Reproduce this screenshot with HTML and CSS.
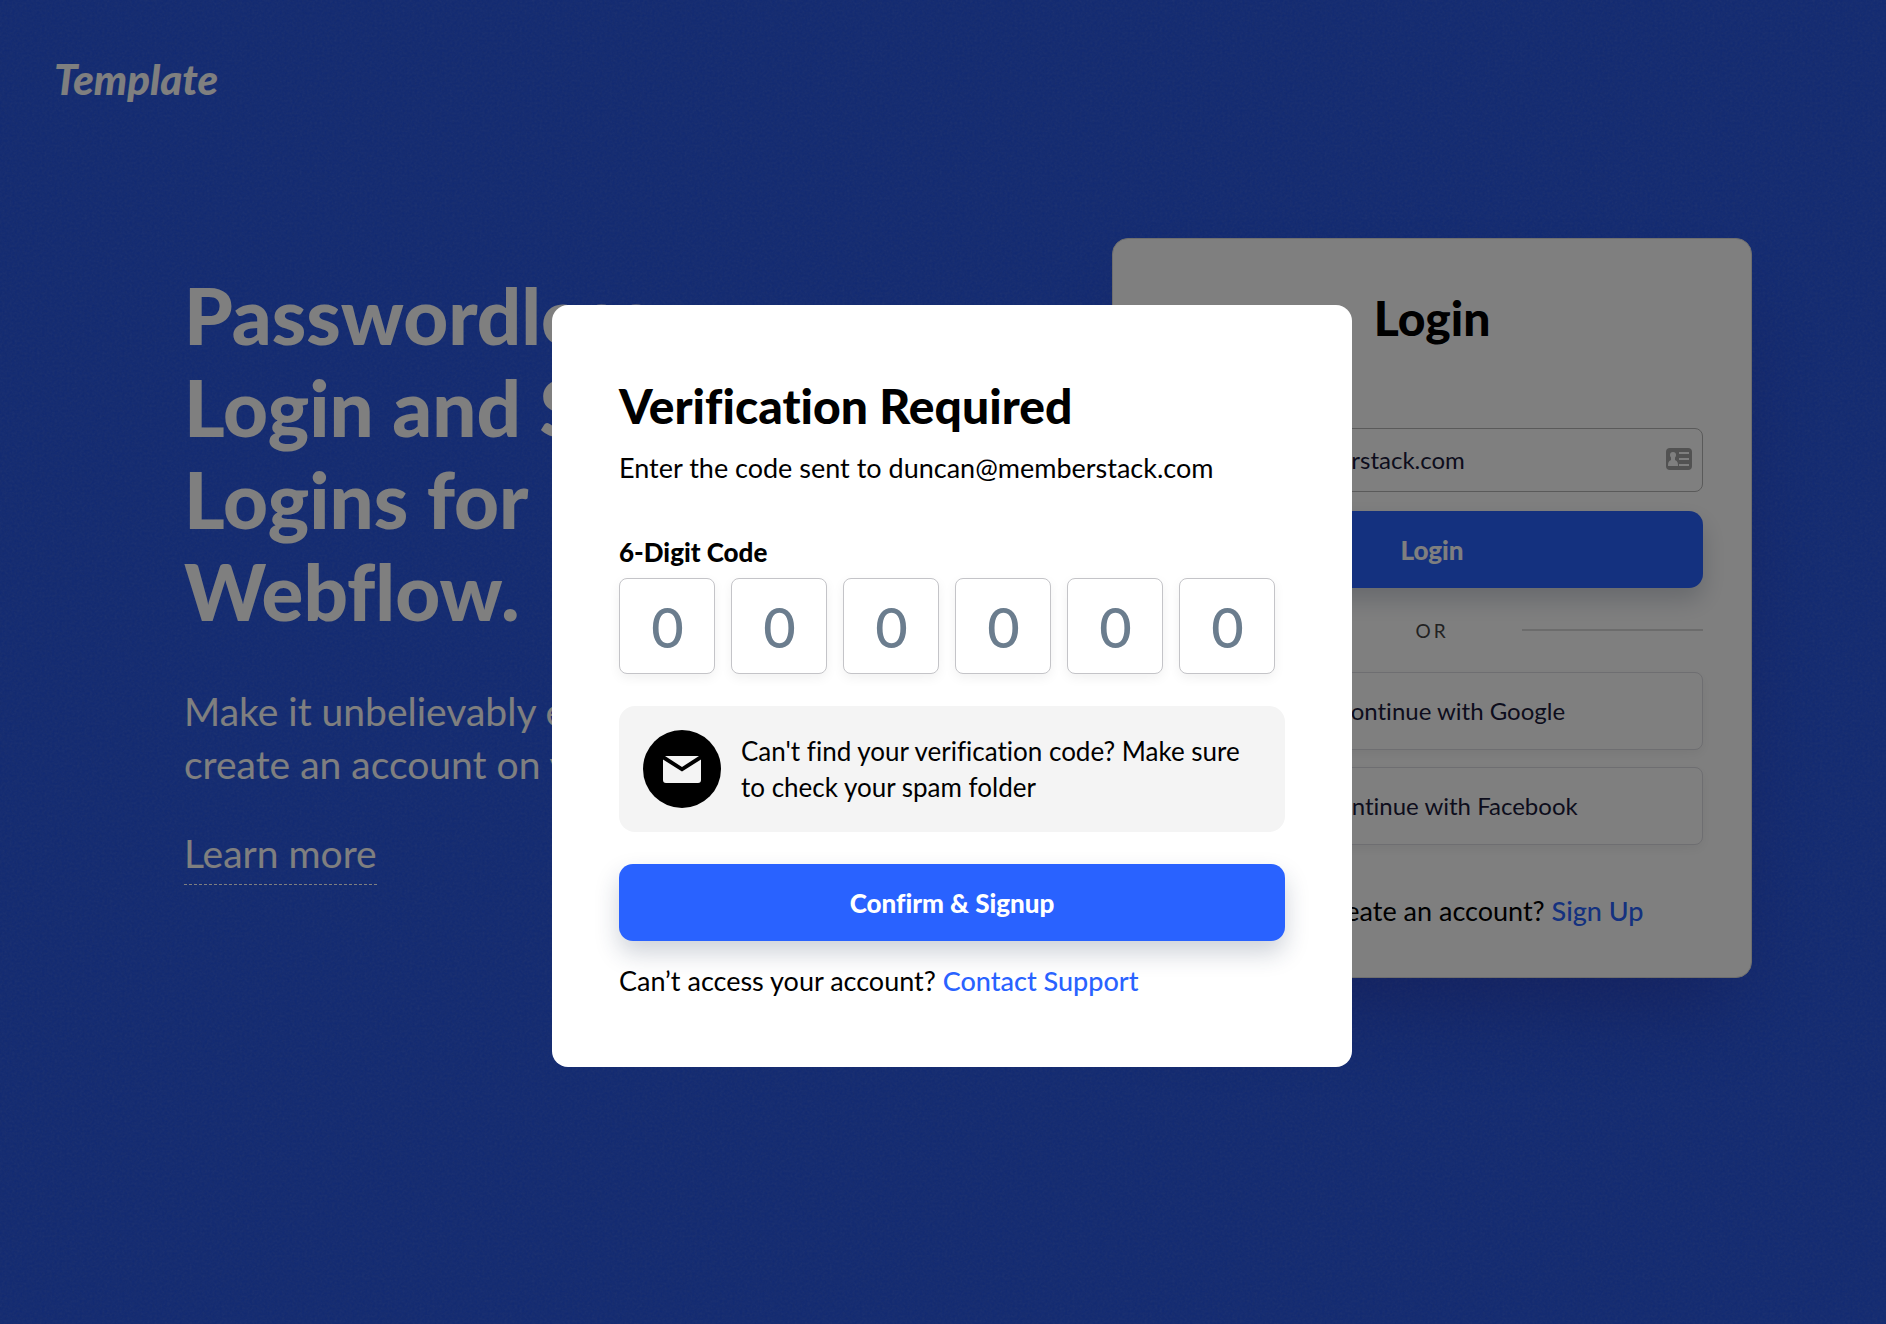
FILE: index.html
```html
<!DOCTYPE html>
<html lang="en">
<head>
<meta charset="utf-8">
<meta name="viewport" content="width=device-width, initial-scale=1">
<title>Passwordless Login</title>
<link rel="stylesheet" href="styles.css">
</head>
<body>
<div class="page">
  <svg class="grain" aria-hidden="true">
    <filter id="noise"><feTurbulence type="fractalNoise" baseFrequency="0.4" numOctaves="3" stitchTiles="stitch"/><feColorMatrix type="saturate" values="0"/></filter>
    <rect width="100%" height="100%" filter="url(#noise)"/>
  </svg>
  <header class="header"><a class="brand" href="#">Template</a></header>
  <main class="hero">
    <section class="intro">
      <h1 class="headline">Passwordless<br>Login and Social<br>Logins for<br>Webflow.</h1>
      <p class="lead">Make it unbelievably easy to<br>create an account on your site.</p>
      <a class="learn" href="#">Learn more</a>
    </section>
    <form class="card">
      <h2 class="title card-title">Login</h2>
      <div class="field">
        <input class="email" type="email" aria-label="Email" value="duncan@memberstack.com">
        <svg class="contact-icon" viewBox="0 0 26 22" aria-hidden="true">
          <rect width="26" height="22" rx="4" fill="#a4a4a4"/>
          <g fill="#fff"><circle cx="7" cy="7" r="3"/><path d="M5 9h4v3c2 1 3 2 3 6H2c0-4 1-5 3-6z"/><rect x="13" y="4" width="10" height="2"/><rect x="13" y="10" width="10" height="2"/><rect x="13" y="16" width="10" height="2"/></g>
        </svg>
      </div>
      <button class="primary" type="button">Login</button>
      <div class="divider"><span class="rule"></span><span>OR</span><span class="rule"></span></div>
      <div class="socials">
        <button class="social" type="button">
          <svg class="social-icon" viewBox="0 0 24 24" aria-hidden="true"><path d="M21 10H12v4h5a5 5 0 1 1-1-6l3-3a9 9 0 1 0 2 5z" fill="#4285f4"/></svg>
          Continue with Google
        </button>
        <button class="social" type="button">
          <svg class="social-icon" viewBox="0 0 24 24" aria-hidden="true"><circle cx="12" cy="12" r="12" fill="#1877f2"/><path d="M10 24v-9H7v-4h3V9c0-3 2-5 6-4v3c-2 0-3 0-3 2v1h3l-1 4h-2v9z" fill="#fff"/></svg>
          Continue with Facebook
        </button>
      </div>
      <p class="note card-note">Need to create an account? <a class="link" href="#">Sign Up</a></p>
    </form>
  </main>
</div>
<div class="overlay">
  <form class="modal" role="dialog" aria-labelledby="modal-title">
    <h2 class="title" id="modal-title">Verification Required</h2>
    <p class="note">Enter the code sent to duncan@memberstack.com</p>
    <fieldset class="code">
      <legend class="code-label">6-Digit Code</legend>
      <div class="digits">
        <input class="digit" aria-label="Digit 1" placeholder="0" maxlength="1">
        <input class="digit" aria-label="Digit 2" placeholder="0" maxlength="1">
        <input class="digit" aria-label="Digit 3" placeholder="0" maxlength="1">
        <input class="digit" aria-label="Digit 4" placeholder="0" maxlength="1">
        <input class="digit" aria-label="Digit 5" placeholder="0" maxlength="1">
        <input class="digit" aria-label="Digit 6" placeholder="0" maxlength="1">
      </div>
    </fieldset>
    <div class="hint">
      <svg class="hint-icon" viewBox="0 0 78 78" aria-hidden="true">
        <circle cx="39" cy="39" r="39"/>
        <path d="M20 29.500L39 41.500L58 29.500V50a3 3 0 0 1-3 3h-32a3 3 0 0 1-3-3z" fill="#f4f4f4"/>
        <path d="M22 26h34L39 37z" fill="#f4f4f4"/>
      </svg>
      <p class="hint-text">Can't find your verification code? Make sure to check your spam folder</p>
    </div>
    <button class="primary" type="button">Confirm &amp; Signup</button>
    <p class="note support">Can’t access your account? <a class="link" href="#">Contact Support</a></p>
  </form>
</div>
</body>
</html>
```
FILE: styles.css
```css
* { box-sizing: border-box; }
body { margin: 0; font-family: Lato, "Open Sans", sans-serif; font-variant-ligatures: none; color: #000; }
h1, h2, p { margin: 0; }
button, input { font: inherit; font-variant-ligatures: none; }
a { text-decoration: none; }

.page { position: relative; min-height: 100vh; background: #2253e6; }
.grain { position: absolute; inset: 0; width: 100%; height: 100%; opacity: 0.14; }
.header { position: relative; padding: 51px 54px 0; }
.brand { display: inline-block; color: #fff; font-size: 42px; line-height: 56px; font-weight: 900; font-style: italic; }

.hero {
  position: relative;
  display: grid;
  grid-template-columns: 1fr 640px;
  align-items: start;
  padding: 131px 134px 64px 184px;
}
.intro { padding-top: 31px; color: #fff; }
.headline { font-size: 78px; line-height: 92px; font-weight: 900; }
.lead { margin: 48px 0 36px; font-size: 39px; line-height: 53px; }
.learn { display: inline-block; padding-bottom: 4px; border-bottom: 1px dashed #fff; color: #fff; font-size: 39px; line-height: 53px; }

.card {
  height: 740px;
  padding: 48px;
  border: 1px solid #dcdcdc;
  border-radius: 16px;
  background: #fff;
  box-shadow: 0 48px 80px -24px rgba(40, 20, 100, 0.3);
}
.title { font-size: 48px; line-height: 56px; font-weight: 900; }
.card-title { margin: 3px 0 82px; text-align: center; }
.field { position: relative; }
.email {
  display: block;
  width: 100%;
  height: 64px;
  padding: 0 48px 2px 14px;
  border: 1px solid #b4b4b4;
  border-radius: 8px;
  background: #fff;
  color: #1a1a3a;
  font-size: 24px;
}
.contact-icon { position: absolute; right: 11px; top: 20px; width: 26px; height: 22px; }
.primary {
  display: block;
  width: 100%;
  height: 77px;
  border: 0;
  border-radius: 14px;
  background: #2962ff;
  box-shadow: 0 12px 24px rgba(30, 50, 80, 0.22);
  color: #fff;
  font-size: 26px;
  font-weight: 900;
}
.card .primary { margin-top: 19px; }
.divider {
  display: grid;
  grid-template-columns: 1fr 180px 1fr;
  align-items: center;
  height: 84px;
  color: #444;
  font-size: 19px;
  letter-spacing: 3px;
  text-align: center;
}
.rule { height: 2px; background: #d8d8d8; }
.socials { display: grid; gap: 17px; }
.social {
  display: flex;
  align-items: center;
  justify-content: center;
  gap: 12px;
  height: 78px;
  padding: 0 6px 2px;
  border: 1px solid #dcdce2;
  border-radius: 8px;
  background: #fff;
  box-shadow: 0 4px 12px rgba(0, 0, 0, 0.06);
  color: #1a1a3a;
  font-size: 24px;
}
.social-icon { width: 24px; height: 24px; }
.note { font-size: 27px; line-height: 36px; }
.card-note { margin-top: 48px; text-align: center; }
.link { color: #2962ff; font-weight: 500; }

.overlay {
  position: fixed;
  inset: 0;
  display: flex;
  align-items: center;
  justify-content: center;
  padding: 48px 0 0 18px;
  background: rgba(0, 0, 0, 0.5);
}
.modal { width: 800px; padding: 71px 67px 68px; border-radius: 16px; background: #fff; }
.modal .title { margin: 2px 0 16px; }
.code { margin: 48px 0 32px; padding: 0; border: 0; }
.code-label { padding: 0 0 8px; font-size: 26px; line-height: 36px; font-weight: 900; }
.digits { display: flex; gap: 16px; }
.digit {
  width: 96px;
  height: 96px;
  padding: 0 0 0 1px;
  border: 1px solid #c4c4c8;
  border-radius: 8px;
  box-shadow: 0 4px 12px rgba(0, 0, 0, 0.06);
  font-size: 56px;
  font-weight: 500;
  text-align: center;
}
.digit::placeholder { color: #6b7d8e; opacity: 1; }
.hint { display: flex; align-items: center; gap: 20px; margin-bottom: 32px; padding: 24px; border-radius: 16px; background: #f4f4f4; }
.hint-icon { flex: none; width: 78px; height: 78px; }
.hint-text { font-size: 26px; line-height: 36px; }
.support { margin-top: 22px; }
```
